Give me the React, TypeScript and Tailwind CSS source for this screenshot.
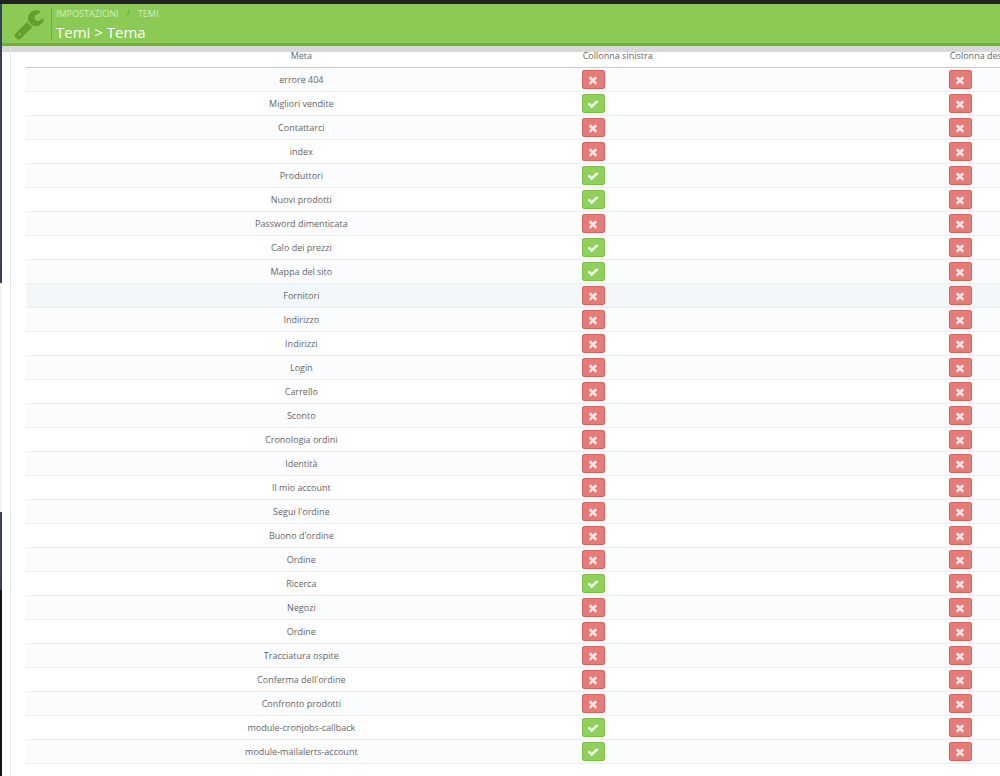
import { useState } from 'react';
import clsx from 'clsx';

interface PageLayout {
  name: string;
  left: boolean;
  right: boolean;
}

const initialPages: PageLayout[] = [
  { name: 'errore 404', left: false, right: false },
  { name: 'Migliori vendite', left: true, right: false },
  { name: 'Contattarci', left: false, right: false },
  { name: 'index', left: false, right: false },
  { name: 'Produttori', left: true, right: false },
  { name: 'Nuovi prodotti', left: true, right: false },
  { name: 'Password dimenticata', left: false, right: false },
  { name: 'Calo dei prezzi', left: true, right: false },
  { name: 'Mappa del sito', left: true, right: false },
  { name: 'Fornitori', left: false, right: false },
  { name: 'Indirizzo', left: false, right: false },
  { name: 'Indirizzi', left: false, right: false },
  { name: 'Login', left: false, right: false },
  { name: 'Carrello', left: false, right: false },
  { name: 'Sconto', left: false, right: false },
  { name: 'Cronologia ordini', left: false, right: false },
  { name: 'Identità', left: false, right: false },
  { name: 'Il mio account', left: false, right: false },
  { name: "Segui l'ordine", left: false, right: false },
  { name: "Buono d'ordine", left: false, right: false },
  { name: 'Ordine', left: false, right: false },
  { name: 'Ricerca', left: true, right: false },
  { name: 'Negozi', left: false, right: false },
  { name: 'Ordine', left: false, right: false },
  { name: 'Tracciatura ospite', left: false, right: false },
  { name: "Conferma dell'ordine", left: false, right: false },
  { name: 'Confronto prodotti', left: false, right: false },
  { name: 'module-cronjobs-callback', left: true, right: false },
  { name: 'module-mailalerts-account', left: true, right: false },
];

const TimesIcon = () => (
  <svg viewBox="0 0 1792 1792" className="size-3" fill="currentColor" aria-hidden="true">
    <path d="M1490 1322q0 40-28 68l-136 136q-28 28-68 28t-68-28l-294-294-294 294q-28 28-68 28t-68-28l-136-136q-28-28-28-68t28-68l294-294-294-294q-28-28-28-68t28-68l136-136q28-28 68-28t68 28l294 294 294-294q28-28 68-28t68 28l136 136q28 28 28 68t-28 68l-294 294 294 294q28 28 28 68z" />
  </svg>
);

const CheckIcon = () => (
  <svg viewBox="0 0 1792 1792" className="size-3" fill="currentColor" aria-hidden="true">
    <path d="M1671 566q0 40-28 68l-724 724-136 136q-28 28-68 28t-68-28l-136-136-362-362q-28-28-28-68t28-68l136-136q28-28 68-28t68 28l294 295 656-657q28-28 68-28t68 28l136 136q28 28 28 68z" />
  </svg>
);

const WrenchIcon = () => (
  <svg viewBox="0 0 1792 1792" className="size-8 text-[#639f2e]" fill="currentColor" aria-hidden="true">
    <path d="M448 1472q0-26-19-45t-45-19-45 19-19 45 19 45 45 19 45-19 19-45zm644-420l-682 682q-37 37-90 37-52 0-91-37l-106-108q-38-36-38-90 0-53 38-91l681-681q39 98 114.500 173.500t173.500 114.500zm634-435q0 39-23 106-47 134-164.500 217.500t-258.500 83.500q-185 0-316.500-131.500t-131.500-316.500 131.500-316.500 316.500-131.500q58 0 121.500 16.500t107.500 46.500q16 11 16 28t-16 28l-293 169v224l193 107q5-3 79-48.500t135.500-81 70.500-35.500q15 0 23.500 10t8.500 25z" />
  </svg>
);

function StatusButton({ enabled, label, onClick }: { enabled: boolean; label: string; onClick: () => void }) {
  return (
    <button
      type="button"
      aria-label={label}
      aria-pressed={enabled}
      onClick={onClick}
      className={clsx(
        'flex h-[19px] w-[23px] items-center justify-center rounded-xs border pt-px text-white/80',
        enabled ? 'border-[#7dc243] bg-[#92cf5f]' : 'border-[#dc6460] bg-[#e27d7a]'
      )}
    >
      {enabled ? <CheckIcon /> : <TimesIcon />}
    </button>
  );
}

export default function App() {
  const [pages, setPages] = useState(initialPages);

  const toggle = (index: number, side: 'left' | 'right') => {
    setPages(pages.map((page, i) => (i === index ? { ...page, [side]: !page[side] } : page)));
  };

  return (
    <div className="flex min-h-screen flex-col overflow-hidden bg-white font-['Open_Sans',sans-serif] text-[#666]">
      <div className="h-1 bg-[#222]" />

      <div className="flex grow">
        {/* Edge of the side menu */}
        <div className="flex w-[2px] shrink-0 flex-col">
          <div className="h-[279px] bg-[#364057]" />
          <div className="h-[229px] bg-[#f2f2f2]" />
          <div className="h-[78px] bg-[#364057]" />
          <div className="grow bg-[#14151c]" />
        </div>

        <div className="flex min-w-0 grow flex-col">
          <header className="flex h-[42px] items-center border-b-3 border-[#72b138] bg-[#8cca56] pl-[11px] shadow-[0_6px_0_#d8d8d8]">
            <WrenchIcon />
            <div className="ml-1.5 h-8 border-l border-[#72b138] pl-1 text-white">
              <nav aria-label="breadcrumb" className="flex text-[9px] leading-3 text-[#d3efb9]">
                <a href="#impostazioni">IMPOSTAZIONI</a>
                <span className="px-2 text-[#639f2e]">/</span>
                <a href="#temi">TEMI</a>
              </nav>
              <h1 className="text-[15px] leading-6">Temi &gt; Tema</h1>
            </div>
          </header>

          <main className="ml-2 grow overflow-x-clip border-l border-[#e6e6e6] pt-1 pl-[15px]">
            <table className="w-[1285px] table-fixed border-separate border-spacing-0 text-[9px]">
              <colgroup>
                <col className="w-3/7" />
                <col className="w-2/7" />
                <col className="w-2/7" />
              </colgroup>
              <thead>
                <tr className="h-[18px] align-top leading-3">
                  <th className="border-b border-[#a5d8ee] p-0 text-center font-normal">Meta</th>
                  <th className="border-b border-[#a5d8ee] py-0 pr-0 pl-1.5 text-left font-normal">Collonna sinistra</th>
                  <th className="border-b border-[#a5d8ee] py-0 pr-0 pl-1.5 text-left font-normal">Colonna destra</th>
                </tr>
              </thead>
              <tbody>
                {pages.map((page, i) => (
                  <tr
                    key={i}
                    className={clsx(
                      'h-6',
                      page.name === 'Fornitori' ? 'bg-[#f2f7fa]' : i % 2 === 0 && 'bg-[#fbfcfe]'
                    )}
                  >
                    <td className="border-b border-[#eaedef] p-0 text-center leading-4">{page.name}</td>
                    <td className="border-b border-[#eaedef] py-0 pr-0 pl-[5px]">
                      <StatusButton
                        enabled={page.left}
                        label={`${page.name}: colonna sinistra`}
                        onClick={() => toggle(i, 'left')}
                      />
                    </td>
                    <td className="border-b border-[#eaedef] py-0 pr-0 pl-[5px]">
                      <StatusButton
                        enabled={page.right}
                        label={`${page.name}: colonna destra`}
                        onClick={() => toggle(i, 'right')}
                      />
                    </td>
                  </tr>
                ))}
              </tbody>
            </table>
          </main>
        </div>
      </div>
    </div>
  );
}
